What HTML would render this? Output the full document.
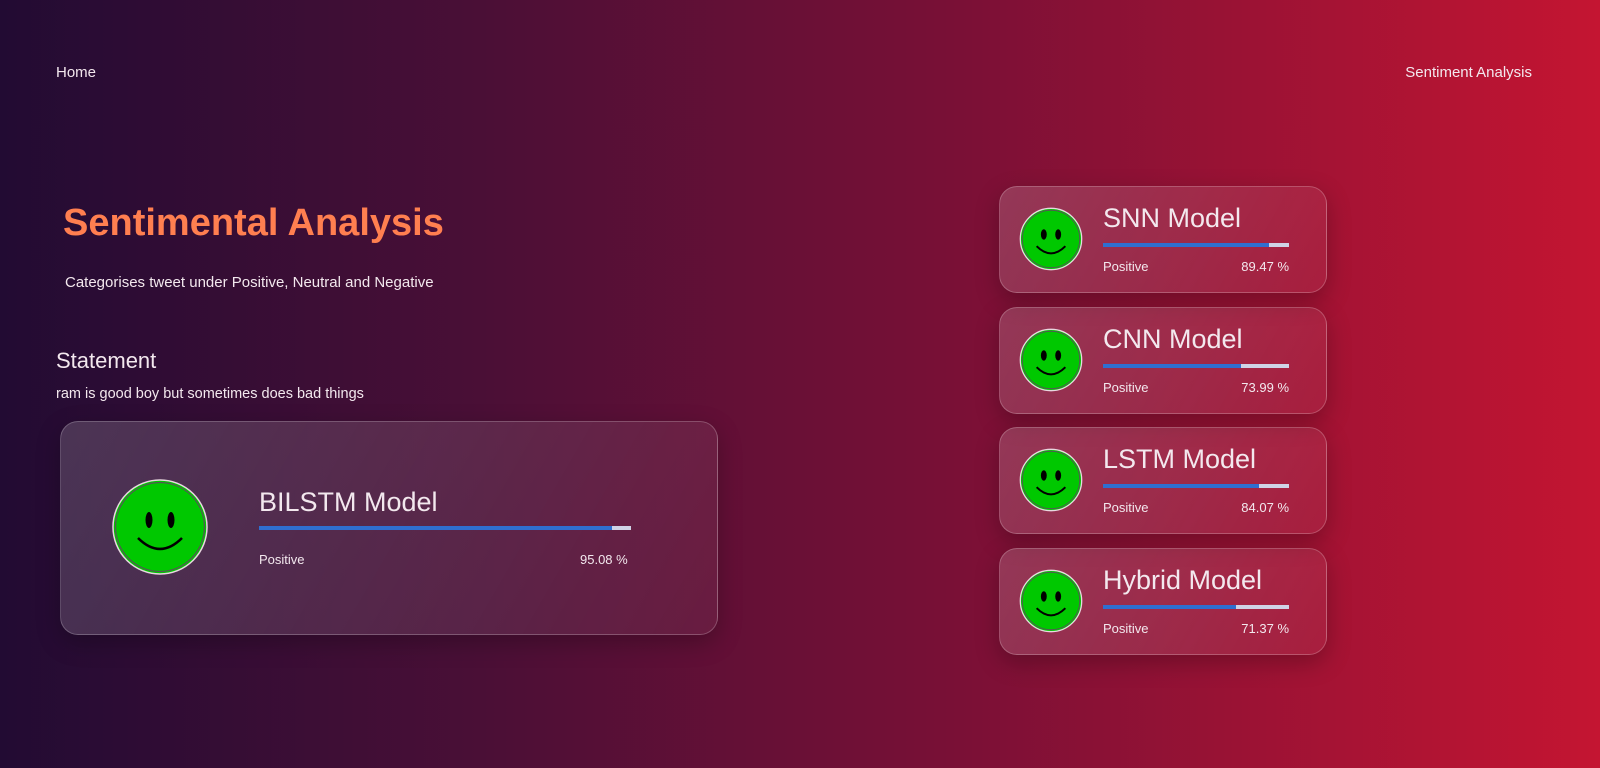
<!DOCTYPE html>
<html><head><style>
body{margin:0;width:1600px;height:768px;overflow:hidden;background:linear-gradient(90deg,#220b33 0%,#4a0f36 30%,#7a1036 60%,#c41532 100%);font-family:"Liberation Sans","DejaVu Sans",sans-serif;color:#f3e8ee;position:relative}
.a{position:absolute;white-space:nowrap}
.card{position:absolute;border-radius:18px;background:linear-gradient(120deg,rgba(255,255,255,0.17),rgba(255,255,255,0.05));border:1px solid rgba(255,255,255,0.22);box-shadow:0 8px 24px rgba(0,0,0,0.25)}
.bar{position:absolute;height:4px;background:#cfd3e6}
.bar i{display:block;height:4px;background:#2f6fd0}
</style></head><body>
<div class="a" style="left:56px;top:64px;font-size:15px">Home</div>
<div class="a" style="right:68px;top:64px;font-size:15px">Sentiment Analysis</div>
<div class="a" style="left:63px;top:202px;font-size:38px;font-weight:bold;color:#ff7f50">Sentimental Analysis</div>
<div class="a" style="left:65px;top:274px;font-size:15px">Categorises tweet under Positive, Neutral and Negative</div>
<div class="a" style="left:56px;top:348px;font-size:22px">Statement</div>
<div class="a" style="left:56px;top:386px;font-size:14.5px">ram is good boy but sometimes does bad things</div>

<div class="card" style="left:60px;top:421px;width:656px;height:212px"></div>
<svg class="a" style="left:111px;top:478px" width="98" height="98" viewBox="0 0 98 98"><circle cx="49" cy="49" r="47" fill="#00c800" stroke="#e8d8e0" stroke-width="1.5"/><circle cx="49" cy="49" r="44.5" fill="none" stroke="#555" stroke-width="1.2"/><ellipse cx="38" cy="42" rx="3.5" ry="8"/><ellipse cx="60" cy="42" rx="3.5" ry="8"/><path d="M27 60 Q49 82 71 60" fill="none" stroke="#000" stroke-width="2.5"/></svg>
<div class="a" style="left:259px;top:487px;font-size:27px">BILSTM Model</div>
<div class="bar" style="left:259px;top:526px;width:372px"><i style="width:95%"></i></div>
<div class="a" style="left:259px;top:552px;font-size:13px">Positive</div>
<div class="a" style="left:580px;top:552px;font-size:13px">95.08 %</div>

<div class="card" style="left:999px;top:186px;width:326px;height:105px"></div>
<div class="card" style="left:999px;top:307px;width:326px;height:105px"></div>
<div class="card" style="left:999px;top:427px;width:326px;height:105px"></div>
<div class="card" style="left:999px;top:548px;width:326px;height:105px"></div>

<svg class="a" style="left:1019px;top:207px" width="64" height="64" viewBox="0 0 98 98"><circle cx="49" cy="49" r="47" fill="#00c800" stroke="#e8d8e0" stroke-width="2"/><circle cx="49" cy="49" r="44" fill="none" stroke="#555" stroke-width="1.5"/><ellipse cx="38" cy="42" rx="4.5" ry="8"/><ellipse cx="60" cy="42" rx="4.5" ry="8"/><path d="M27 60 Q49 82 71 60" fill="none" stroke="#000" stroke-width="3"/></svg>
<svg class="a" style="left:1019px;top:328px" width="64" height="64" viewBox="0 0 98 98"><circle cx="49" cy="49" r="47" fill="#00c800" stroke="#e8d8e0" stroke-width="2"/><circle cx="49" cy="49" r="44" fill="none" stroke="#555" stroke-width="1.5"/><ellipse cx="38" cy="42" rx="4.5" ry="8"/><ellipse cx="60" cy="42" rx="4.5" ry="8"/><path d="M27 60 Q49 82 71 60" fill="none" stroke="#000" stroke-width="3"/></svg>
<svg class="a" style="left:1019px;top:448px" width="64" height="64" viewBox="0 0 98 98"><circle cx="49" cy="49" r="47" fill="#00c800" stroke="#e8d8e0" stroke-width="2"/><circle cx="49" cy="49" r="44" fill="none" stroke="#555" stroke-width="1.5"/><ellipse cx="38" cy="42" rx="4.5" ry="8"/><ellipse cx="60" cy="42" rx="4.5" ry="8"/><path d="M27 60 Q49 82 71 60" fill="none" stroke="#000" stroke-width="3"/></svg>
<svg class="a" style="left:1019px;top:569px" width="64" height="64" viewBox="0 0 98 98"><circle cx="49" cy="49" r="47" fill="#00c800" stroke="#e8d8e0" stroke-width="2"/><circle cx="49" cy="49" r="44" fill="none" stroke="#555" stroke-width="1.5"/><ellipse cx="38" cy="42" rx="4.5" ry="8"/><ellipse cx="60" cy="42" rx="4.5" ry="8"/><path d="M27 60 Q49 82 71 60" fill="none" stroke="#000" stroke-width="3"/></svg>

<div class="a" style="left:1103px;top:203px;font-size:27px">SNN Model</div>
<div class="bar" style="left:1103px;top:243px;width:186px"><i style="width:89.5%"></i></div>
<div class="a" style="left:1103px;top:259px;font-size:13px">Positive</div>
<div class="a" style="right:311px;top:259px;font-size:13px">89.47 %</div>

<div class="a" style="left:1103px;top:324px;font-size:27px">CNN Model</div>
<div class="bar" style="left:1103px;top:364px;width:186px"><i style="width:74%"></i></div>
<div class="a" style="left:1103px;top:380px;font-size:13px">Positive</div>
<div class="a" style="right:311px;top:380px;font-size:13px">73.99 %</div>

<div class="a" style="left:1103px;top:444px;font-size:27px">LSTM Model</div>
<div class="bar" style="left:1103px;top:484px;width:186px"><i style="width:84%"></i></div>
<div class="a" style="left:1103px;top:500px;font-size:13px">Positive</div>
<div class="a" style="right:311px;top:500px;font-size:13px">84.07 %</div>

<div class="a" style="left:1103px;top:565px;font-size:27px">Hybrid Model</div>
<div class="bar" style="left:1103px;top:605px;width:186px"><i style="width:71.4%"></i></div>
<div class="a" style="left:1103px;top:621px;font-size:13px">Positive</div>
<div class="a" style="right:311px;top:621px;font-size:13px">71.37 %</div>
</body></html>
